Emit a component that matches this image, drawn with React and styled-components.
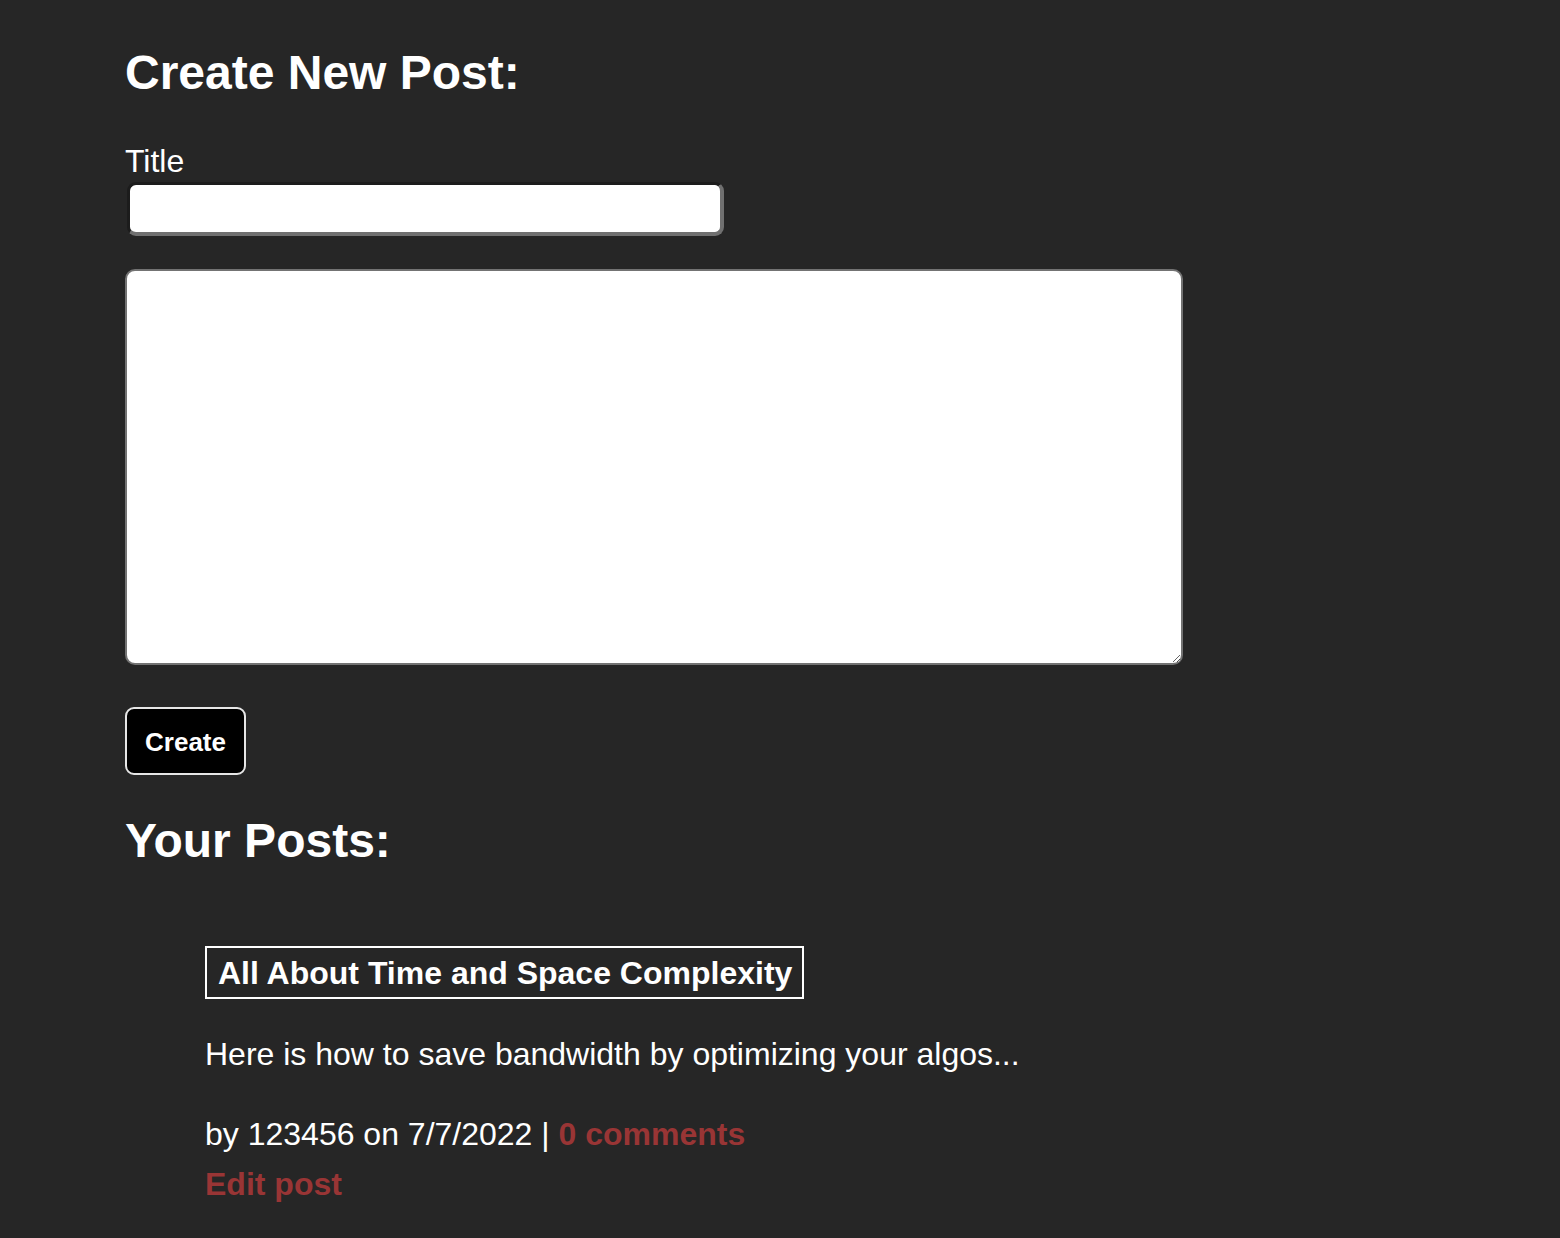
import React from "react";
import styled, { createGlobalStyle } from "styled-components";

const GlobalStyle = createGlobalStyle`
  html, body {
    margin: 0;
    padding: 0;
    background: #262626;
  }
  body {
    font-family: "Liberation Sans", Helvetica, Arial, sans-serif;
    color: #ffffff;
    min-height: 1238px;
  }
`;

const Page = styled.main`
  padding: 45px 0 40px 125px;
`;

const Heading = styled.h1`
  margin: 0;
  font-size: 48px;
  line-height: 55px;
  font-weight: 700;
  margin-top: ${(p) => p.$top || 0}px;
`;

const Form = styled.form`
  display: flex;
  flex-direction: column;
  align-items: flex-start;
`;

const Label = styled.label`
  display: block;
  margin-top: 43px;
  font-size: 32px;
  line-height: 37px;
`;

const TitleInput = styled.input`
  box-sizing: border-box;
  margin: 2px 0 0 2px;
  width: 597px;
  height: 54px;
  background: #ffffff;
  border-style: solid;
  border-width: 3px 4px 4px 3px;
  border-color: #1c1c1c #707070 #707070 #1c1c1c;
  border-radius: 9px;
  font-family: inherit;
  font-size: 24px;
  padding: 0 10px;
  outline: none;
`;

const Body = styled.textarea`
  box-sizing: border-box;
  margin-top: 33px;
  width: 1058px;
  height: 396px;
  background: #ffffff;
  border: 2px solid #737373;
  border-radius: 10px;
  font-family: inherit;
  font-size: 20px;
  padding: 8px;
  outline: none;
`;

const CreateButton = styled.button`
  box-sizing: border-box;
  margin-top: 42px;
  width: 121px;
  height: 68px;
  background: #000000;
  color: #ffffff;
  border: 2px solid #e6e6e6;
  border-radius: 9px;
  font-family: inherit;
  font-size: 26px;
  font-weight: 700;
  padding: 2px 0 0;
  cursor: pointer;
`;

const PostList = styled.section`
  margin-top: 78px;
  padding-left: 80px;
`;

const Post = styled.article`
  display: flex;
  flex-direction: column;
  align-items: flex-start;
`;

const PostTitle = styled.h3`
  margin: 0;
  display: inline-block;
  border: 2px solid #ffffff;
  padding: 7px 10px 5px 11px;
  font-size: 32px;
  line-height: 37px;
  font-weight: 700;
`;

const Text = styled.p`
  margin: ${(p) => p.$top}px 0 0;
  font-size: 32px;
  line-height: 37px;
`;

const RedLink = styled.a`
  color: #993535;
  font-weight: 700;
  text-decoration: none;
  cursor: pointer;
`;

const EditLink = styled(RedLink)`
  display: block;
  margin-top: 13px;
  font-size: 32px;
  line-height: 37px;
`;

export default function App() {
  return (
    <>
      <GlobalStyle />
      <Page>
        <Heading>Create New Post:</Heading>
        <Form onSubmit={(e) => e.preventDefault()}>
          <Label htmlFor="title">Title</Label>
          <TitleInput id="title" type="text" />
          <Body />
          <CreateButton type="submit">Create</CreateButton>
        </Form>
        <Heading $top={38}>Your Posts:</Heading>
        <PostList>
          <Post>
            <PostTitle>All About Time and Space Complexity</PostTitle>
            <Text $top={37}>Here is how to save bandwidth by optimizing your algos...</Text>
            <Text $top={43}>
              by 123456 on 7/7/2022 | <RedLink>0 comments</RedLink>
            </Text>
            <EditLink>Edit post</EditLink>
          </Post>
        </PostList>
      </Page>
    </>
  );
}
